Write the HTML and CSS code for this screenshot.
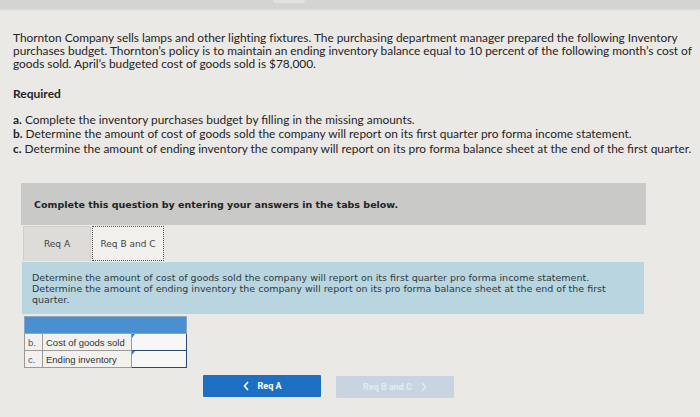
FILE: index.html
```html
<!DOCTYPE html>
<html lang="en">
<head>
<meta charset="utf-8">
<title>Thornton Company</title>
<link rel="stylesheet" href="styles.css">
</head>
<body>
<div class="topbar"><span class="topnub"></span></div>
<main class="page">
  <p class="intro">Thornton Company sells lamps and other lighting fixtures. The purchasing department manager prepared the following Inventory purchases budget. Thornton’s policy is to maintain an ending inventory balance equal to 10 percent of the following month’s cost of goods sold. April’s budgeted cost of goods sold is $78,000.</p>
  <h3 class="req">Required</h3>
  <ul class="tasks">
    <li><b>a.</b> Complete the inventory purchases budget by filling in the missing amounts.</li>
    <li><b>b.</b> Determine the amount of cost of goods sold the company will report on its first quarter pro forma income statement.</li>
    <li><b>c.</b> Determine the amount of ending inventory the company will report on its pro forma balance sheet at the end of the first quarter.</li>
  </ul>

  <section class="question">
    <div class="banner">Complete this question by entering your answers in the tabs below.</div>
    <div class="tabs">
      <div class="tab">Req A</div>
      <div class="tab active">Req B and C</div>
    </div>
    <div class="info">Determine the amount of cost of goods sold the company will report on its first quarter pro forma income statement.<br>Determine the amount of ending inventory the company will report on its pro forma balance sheet at the end of the first quarter.</div>
    <table class="answers">
      <thead><tr><th colspan="3"></th></tr></thead>
      <tbody>
        <tr><td class="lbl">b.</td><td class="name">Cost of goods sold</td><td class="inp"><span class="mark"></span></td></tr>
        <tr><td class="lbl">c.</td><td class="name">Ending inventory</td><td class="inp"><span class="mark"></span></td></tr>
      </tbody>
    </table>
    <div class="nav">
      <button class="btn prev"><svg class="chev" width="6" height="10" viewBox="0 0 6 10"><path d="M5 1 L1.5 5 L5 9" fill="none" stroke="#fff" stroke-width="1.6"/></svg>Req A</button>
      <button class="btn next" disabled>Req B and C<svg class="chev after" width="6" height="10" viewBox="0 0 6 10"><path d="M1 1 L4.5 5 L1 9" fill="none" stroke="#e3ebf2" stroke-width="1.4"/></svg></button>
    </div>
  </section>
</main>
</body>
</html>
```

FILE: styles.css
```css
* { box-sizing: border-box; }
html, body { margin: 0; padding: 0; }
body {
  background: #ebe9e5;
  width: 700px;
  height: 417px;
  overflow: hidden;
  font-family: Lato, "Liberation Sans", sans-serif;
  color: #252525;
}
.topbar {
  height: 9px;
  background: #d4d4d2;
  box-shadow: 0 1px 2px rgba(0,0,0,0.08);
  position: relative;
}
.topnub {
  position: absolute;
  left: 273px;
  top: 0;
  width: 32px;
  height: 3px;
  background: #e2e2e0;
  border-radius: 0 0 3px 3px;
}
.page {
  padding: 22px 0 0 13px;
}
.intro {
  margin: 0;
  font-size: 11.9px;
  line-height: 13px;
  letter-spacing: -0.02px;
}
.req {
  margin: 17px 0 0;
  font-size: 12px;
  line-height: 13px;
  font-weight: 700;
}
.tasks {
  list-style: none;
  margin: 13px 0 0;
  padding: 0;
  font-size: 11.9px;
  line-height: 14.4px;
}
.question {
  margin: 27px 0 0 8px;
  width: 625px;
}
.banner {
  height: 42px;
  background: #c9c9c7;
  display: flex;
  align-items: center;
  padding: 0 0 0 13px;
  font-family: "DejaVu Sans", Verdana, sans-serif;
  font-weight: 700;
  font-size: 9.5px;
  color: #222;
}
.tabs {
  display: flex;
  margin: 1px 0 0 2px;
  height: 35px;
}
.tab {
  width: 68px;
  display: flex;
  align-items: center;
  justify-content: center;
  background: #dddcd8;
  border: 1px solid #cfcecb;
  border-bottom: none;
  font-family: "DejaVu Sans", Verdana, sans-serif;
  font-size: 9px;
  color: #444;
}
.tab.active {
  width: 72px;
  margin-left: 1px;
  background: #f1f0ed;
  border: 1px dotted #555;
}
.info {
  margin: 1px 2px 0 1px;
  background: #b9d5e0;
  padding: 10px 10px 9px 10px;
  font-family: "DejaVu Sans", Verdana, sans-serif;
  font-size: 9.5px;
  line-height: 11px;
  color: #2e3a40;
}
.answers {
  margin: 2px 0 0 3px;
  border-collapse: collapse;
  font-family: "Liberation Sans", Arial, sans-serif;
  font-size: 9.5px;
  color: #333;
}
.answers th {
  height: 17px;
  background: #4a8fd0;
  border: 1px solid #8aa6c0;
  padding: 0;
}
.answers td {
  height: 17px;
  border: 1px solid #9a9a98;
  background: #f2f1ee;
  padding: 0 3px;
}
.answers td.lbl { width: 18px; color: #555; }
.answers td.name { width: 89px; }
.answers td.inp {
  width: 55px;
  background: #f7f7f5;
  border: 1.5px solid #2c4a6e;
  position: relative;
}
.mark {
  position: absolute;
  left: 0;
  top: 0;
  width: 0;
  height: 0;
  border-top: 4px solid #3b7fd0;
  border-right: 3px solid transparent;
}
.nav {
  display: flex;
  gap: 15px;
  margin: 7px 0 0 182px;
}
.btn {
  width: 118px;
  height: 22px;
  border: none;
  border-radius: 1px;
  display: flex;
  align-items: center;
  justify-content: center;
  gap: 9px;
  font-family: Roboto, "Liberation Sans", sans-serif;
  font-weight: 700;
  font-size: 9px;
  padding: 0;
}
.btn.prev { background: #1c6fc3; color: #fff; }
.btn.next { background: #c8d5e0; color: #e3ebf2; margin-top: 1px; }
.chev { display: block; }
```
